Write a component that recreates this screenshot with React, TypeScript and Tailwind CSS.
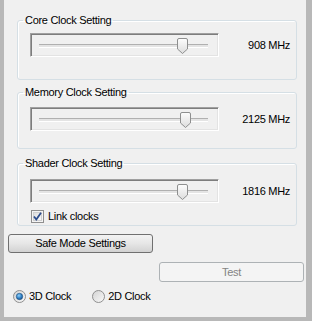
import React from 'react';

const font = { fontFamily: '"Liberation Sans", Arial, sans-serif' };

const Thumb: React.FC = () => (
  <svg width="11" height="16" viewBox="0 0 11 16">
    <defs>
      <linearGradient id="thumbFill" x1="0" y1="0" x2="0" y2="1">
        <stop offset="0" stopColor="#fdfdfd" />
        <stop offset="1" stopColor="#dcdcdc" />
      </linearGradient>
    </defs>
    <path
      d="M2 0.5 H9 Q10.5 0.5 10.5 2 V11 L5.5 15.5 L0.5 11 V2 Q0.5 0.5 2 0.5 Z"
      fill="url(#thumbFill)"
      stroke="#8e8f8f"
      strokeWidth="1"
    />
  </svg>
);

const Slider: React.FC<{ pos: number }> = ({ pos }) => (
  <div className="relative w-[189px] h-[24px] border border-t-[#a0a0a0] border-l-[#a0a0a0] border-b-white border-r-white shadow-[inset_1px_1px_0_#7d7d7d,inset_-1px_-1px_0_#e3e3e3]">
    <div className="absolute left-[8px] right-[10px] top-[10px] h-[3px] border-t border-[#b0b0b0] bg-[#e4e4e4] shadow-[0_1px_0_#ffffff]" />
    <div className="absolute top-[4px]" style={{ left: `${pos}px` }}>
      <Thumb />
    </div>
  </div>
);

const Group: React.FC<{
  title: string;
  className: string;
  children: React.ReactNode;
}> = ({ title, className, children }) => (
  <fieldset
    className={`ml-[13px] w-[280px] border border-[#d5dfe5] rounded-[3px] shadow-[inset_1px_1px_0_#ffffff] ${className}`}
  >
    <legend className="ml-[5px] px-[2px] text-[11px] leading-[12px] text-black">{title}</legend>
    {children}
  </fieldset>
);

const SliderRow: React.FC<{ pos: number; value: string; top: string }> = ({ pos, value, top }) => (
  <div className={`flex items-center pl-[12px] pr-[6px] ${top}`}>
    <Slider pos={pos} />
    <span className="flex-1 text-right text-[11px] leading-[13px] text-black">{value}</span>
  </div>
);

const Checkbox: React.FC = () => (
  <svg width="13" height="13" viewBox="0 0 13 13">
    <defs>
      <linearGradient id="cbFill" x1="0" y1="0" x2="1" y2="1">
        <stop offset="0" stopColor="#dcdcdc" />
        <stop offset="1" stopColor="#fbfbfb" />
      </linearGradient>
    </defs>
    <rect x="0.5" y="0.5" width="12" height="12" fill="#f4f4f4" stroke="#8f8f8f" />
    <rect x="2.5" y="2.5" width="8" height="8" fill="url(#cbFill)" stroke="#d0d0d0" />
    <path d="M3 6.5 L5.3 9.5 L10 2.8" fill="none" stroke="#2c4c8c" strokeWidth="1.8" />
  </svg>
);

const Radio: React.FC<{ checked?: boolean }> = ({ checked }) => (
  <svg width="13" height="13" viewBox="0 0 13 13">
    <defs>
      <linearGradient id="rdFill" x1="0" y1="0" x2="1" y2="1">
        <stop offset="0" stopColor="#d2d2d2" />
        <stop offset="1" stopColor="#fafafa" />
      </linearGradient>
      <radialGradient id="rdDot" cx="0.4" cy="0.35" r="0.7">
        <stop offset="0" stopColor="#8fd0fa" />
        <stop offset="0.6" stopColor="#2e7fc4" />
        <stop offset="1" stopColor="#1b4f86" />
      </radialGradient>
    </defs>
    <circle cx="6.5" cy="6.5" r="6" fill="url(#rdFill)" stroke="#8f8f8f" />
    {checked && <circle cx="6.5" cy="6.5" r="3.2" fill="url(#rdDot)" stroke="#1f4f7e" strokeWidth="0.6" />}
  </svg>
);

export default function App() {
  return (
    <div className="w-[312px] h-[321px] bg-[#b8b8b8] pl-[4px] pr-[6px] pb-[4px] tracking-[-0.3px]" style={font}>
      <div className="h-full bg-[#f0f0f0] flex flex-col overflow-hidden">
        <Group title="Core Clock Setting" className="mt-[14px] pb-[22px]">
          <SliderRow pos={146} value="908 MHz" top="mt-[7px]" />
        </Group>

        <Group title="Memory Clock Setting" className="mt-[6px] pb-[17px]">
          <SliderRow pos={149} value="2125 MHz" top="mt-[9px]" />
        </Group>

        <Group title="Shader Clock Setting" className="mt-[8px] pb-[2px]">
          <SliderRow pos={146} value="1816 MHz" top="mt-[10px]" />
          <div className="flex items-center mt-[7px] pl-[13px] h-[13px]">
            <Checkbox />
            <span className="ml-[4px] text-[11px] leading-[13px] text-black">Link clocks</span>
          </div>
        </Group>

        <button className="mt-[8px] ml-[4px] w-[145px] h-[19px] border border-[#707070] rounded-[3px] bg-gradient-to-b from-[#f3f3f3] via-[#e6e6e6] to-[#d2d2d2] text-[11px] leading-[13px] text-black">
          Safe Mode Settings
        </button>

        <button
          disabled
          className="mt-[9px] ml-[155px] w-[145px] h-[20px] border border-[#adb2b5] rounded-[3px] bg-[#f4f4f4] text-[11px] leading-[13px] text-[#838383]"
        >
          Test
        </button>

        <div className="flex items-center mt-[8px] ml-[9px] h-[13px] text-[11px] leading-[13px] text-black">
          <Radio checked />
          <span className="ml-[3px]">3D Clock</span>
          <span className="ml-[21px] flex items-center">
            <Radio />
            <span className="ml-[3px]">2D Clock</span>
          </span>
        </div>
      </div>
    </div>
  );
}
